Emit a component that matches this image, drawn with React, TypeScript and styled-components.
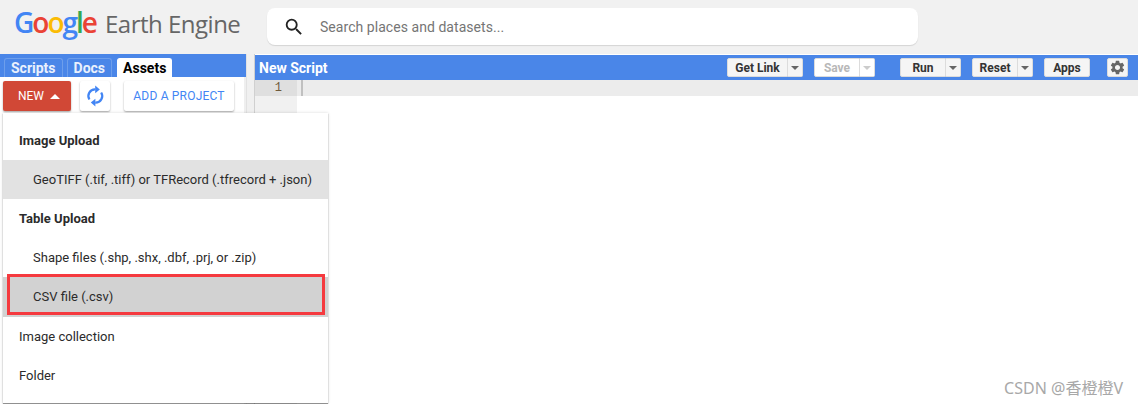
import styled, { createGlobalStyle } from 'styled-components';
import { MdSearch, MdSettings } from 'react-icons/md';

const GlobalStyle = createGlobalStyle`
	html, body {
		margin: 0;
		padding: 0;
		background: #fff;
		font-family: Roboto, 'Liberation Sans', sans-serif;
	}
`;

const Page = styled.div`
	position: relative;
	width: 1138px;
	height: 404px;
	overflow: hidden;
	display: flex;
	flex-direction: column;
`;

const Header = styled.header`
	display: flex;
	align-items: flex-start;
	height: 54px;
	background: #f1f1f1;
	flex-shrink: 0;
`;

const Logo = styled.div`
	display: flex;
	align-items: baseline;
	width: 267px;
	padding: 3px 0 0 14px;
	box-sizing: border-box;
	white-space: nowrap;
`;

const GoogleWord = styled.span`
	font-family: 'Open Sans', sans-serif;
	font-size: 28px;
	font-weight: 600;
	letter-spacing: -2px;
	margin-right: 9px;
`;

const Letter = styled.span<{ $color: string }>`
	color: ${(p) => p.$color};
`;

const EarthEngine = styled.span`
	font-family: 'Open Sans', sans-serif;
	font-size: 24px;
	color: #666;
	letter-spacing: -0.5px;
`;

const SearchBox = styled.div`
	display: flex;
	align-items: center;
	width: 651px;
	height: 37px;
	margin-top: 8px;
	padding-left: 16px;
	box-sizing: border-box;
	background: #fff;
	border-radius: 8px;
	box-shadow: 0 1px 1px rgba(0, 0, 0, 0.12);
	color: #222;
	font-size: 22px;
`;

const SearchText = styled.span`
	margin-left: 15px;
	font-size: 14px;
	color: #757575;
	letter-spacing: 0.05px;
`;

const Body = styled.div`
	display: flex;
	flex: 1;
	min-height: 0;
`;

const LeftPanel = styled.section`
	position: relative;
	width: 246px;
	flex-shrink: 0;
	box-sizing: border-box;
	border-right: 2px solid #efefef;
`;

const TabBar = styled.div`
	display: flex;
	align-items: flex-end;
	gap: 4px;
	height: 23px;
	margin-right: -2px;
	padding-left: 4px;
	background: #4a86e8;
`;

const Tab = styled.div<{ $active?: boolean }>`
	height: 18px;
	padding: 0 ${(p) => (p.$active ? '5px' : '6px')};
	margin-left: ${(p) => (p.$active ? '1px' : '0')};
	border: 1px solid ${(p) => (p.$active ? '#fff' : '#6d9eeb')};
	border-bottom: 0;
	border-radius: 3px 3px 0 0;
	background: ${(p) => (p.$active ? '#fff' : 'transparent')};
	color: ${(p) => (p.$active ? '#000' : '#eaf1fd')};
	font-size: 14px;
	font-weight: 700;
	line-height: 18px;
`;

const ActionRow = styled.div`
	display: flex;
	align-items: flex-start;
	gap: 9px;
	padding: 4px 0 0 3px;
`;

const NewButton = styled.div`
	display: flex;
	align-items: center;
	justify-content: center;
	gap: 6px;
	width: 68px;
	height: 30px;
	padding-left: 4px;
	box-sizing: border-box;
	background: #d14836;
	border-radius: 2px;
	box-shadow: 0 1px 2px rgba(0, 0, 0, 0.35);
	color: #fff;
	font-size: 12px;
`;

const Caret = styled.span`
	width: 0;
	height: 0;
	border-left: 5px solid transparent;
	border-right: 5px solid transparent;
	border-bottom: 5px solid #fff;
`;

const RaisedButton = styled.div`
	display: flex;
	align-items: center;
	justify-content: center;
	height: 30px;
	background: #fff;
	border-radius: 2px;
	box-shadow: 0 1px 2px rgba(0, 0, 0, 0.35);
	color: #4285f4;
	font-size: 12px;
`;

const RefreshButton = styled(RaisedButton)`
	width: 30px;
`;

const ProjectButton = styled(RaisedButton)`
	width: 110px;
	margin-left: 5px;
	letter-spacing: 0.2px;
`;

const Menu = styled.div`
	position: absolute;
	top: 59px;
	left: 3px;
	width: 325px;
	height: 290px;
	padding-top: 8px;
	box-sizing: border-box;
	background: #fff;
	box-shadow: 0 1px 1px rgba(0, 0, 0, 0.4), 0 0 3px rgba(0, 0, 0, 0.15);
	z-index: 2;
`;

const MenuItem = styled.div<{ $heading?: boolean; $nested?: boolean; $shade?: string; $tall?: boolean }>`
	position: relative;
	height: ${(p) => (p.$tall ? '40px' : '39px')};
	padding-left: ${(p) => (p.$nested ? '30px' : '16px')};
	background: ${(p) => p.$shade ?? 'transparent'};
	color: #2b2b2b;
	font-size: 13px;
	font-weight: ${(p) => (p.$heading ? 700 : 400)};
	line-height: 39px;
`;

const Highlight = styled.div`
	position: absolute;
	inset: -3px 3px 2px 4px;
	border: 3px solid #f53a3f;
`;

const Splitter = styled.div`
	width: 9px;
	flex-shrink: 0;
	box-sizing: border-box;
	background: #f0f0f0;
	border-left: 1px solid #e2e2e2;
	border-right: 1px solid #d0d0d0;
`;

const EditorPanel = styled.section`
	display: flex;
	flex-direction: column;
	flex: 1;
	min-width: 0;
`;

const EditorBar = styled.div`
	display: flex;
	align-items: center;
	height: 25px;
	margin-top: 1px;
	padding-right: 10px;
	background: #4a86e8;
`;

const ScriptTitle = styled.div`
	padding-left: 4px;
	color: #fff;
	font-size: 14px;
	font-weight: 700;
	margin-right: auto;
`;

const ButtonGroup = styled.div<{ $gap: number }>`
	display: flex;
	margin-left: ${(p) => p.$gap}px;
`;

const BarButton = styled.div<{ $width: number; $disabled?: boolean; $split?: boolean }>`
	display: flex;
	align-items: center;
	justify-content: center;
	width: ${(p) => p.$width}px;
	height: 19px;
	box-sizing: border-box;
	background: ${(p) => (p.$disabled ? '#fff' : '#f5f5f5')};
	border: 1px solid #dcdcdc;
	border-radius: ${(p) => (p.$split ? '2px 0 0 2px' : '2px')};
	color: ${(p) => (p.$disabled ? '#b8b8b8' : '#333')};
	font-size: 12px;
	font-weight: 700;
`;

const DropButton = styled.div<{ $disabled?: boolean }>`
	display: flex;
	align-items: center;
	justify-content: center;
	width: 15px;
	height: 19px;
	box-sizing: border-box;
	background: ${(p) => (p.$disabled ? '#fff' : '#f5f5f5')};
	border: 1px solid #dcdcdc;
	border-left: 0;
	border-radius: 0 2px 2px 0;

	&::after {
		content: '';
		border-left: 4px solid transparent;
		border-right: 4px solid transparent;
		border-top: 4px solid ${(p) => (p.$disabled ? '#ccc' : '#666')};
	}
`;

const GearButton = styled(BarButton)`
	color: #666;
	font-size: 17px;
`;

const CodeArea = styled.div`
	flex: 1;
	background: linear-gradient(to right, #f1f1f1 42px, #fff 42px);
`;

const CodeLine = styled.div`
	display: flex;
	height: 16px;
	background: #ececec;
`;

const Gutter = styled.div`
	width: 42px;
	padding-right: 15px;
	box-sizing: border-box;
	background: #dfdfdf;
	color: #6f5a3a;
	font-family: 'Liberation Mono', monospace;
	font-size: 12px;
	line-height: 16px;
	text-align: right;
`;

const Cursor = styled.div`
	width: 2px;
	margin-left: 4px;
	background: #c0c0c0;
`;

const Watermark = styled.div`
	position: absolute;
	right: 15px;
	bottom: 5px;
	color: #a8a8a8;
	font-family: 'Noto Sans', 'Noto Sans CJK SC', sans-serif;
	font-size: 16px;
`;

const GOOGLE_LETTERS: [string, string][] = [
	['G', '#4285f4'],
	['o', '#ea4335'],
	['o', '#fbbc05'],
	['g', '#4285f4'],
	['l', '#34a853'],
	['e', '#ea4335'],
];

const RefreshIcon = () => (
	<svg width="30" height="30" viewBox="0 0 30 30" fill="none">
		<path d="M9.4 18.5A6.6 6.6 0 0 1 15.4 8.4" stroke="currentColor" strokeWidth="2.2" />
		<path d="M15.2 4.6 19.8 8.4 15.2 12.2Z" fill="currentColor" />
		<path d="M21.2 11.5A6.6 6.6 0 0 1 15.2 21.6" stroke="currentColor" strokeWidth="2.2" />
		<path d="M15.4 17.8 10.8 21.6 15.4 25.4Z" fill="currentColor" />
	</svg>
);

const App = () => (
	<Page>
		<GlobalStyle />
		<Header>
			<Logo>
				<GoogleWord>
					{GOOGLE_LETTERS.map(([char, color], i) => (
						<Letter key={i} $color={color}>
							{char}
						</Letter>
					))}
				</GoogleWord>
				<EarthEngine>Earth Engine</EarthEngine>
			</Logo>
			<SearchBox>
				<MdSearch />
				<SearchText>Search places and datasets...</SearchText>
			</SearchBox>
		</Header>
		<Body>
			<LeftPanel>
				<TabBar>
					<Tab>Scripts</Tab>
					<Tab>Docs</Tab>
					<Tab $active>Assets</Tab>
				</TabBar>
				<ActionRow>
					<NewButton>
						NEW <Caret />
					</NewButton>
					<RefreshButton>
						<RefreshIcon />
					</RefreshButton>
					<ProjectButton>ADD A PROJECT</ProjectButton>
				</ActionRow>
				<Menu>
					<MenuItem $heading>Image Upload</MenuItem>
					<MenuItem $nested $shade="#e2e2e2">
						GeoTIFF (.tif, .tiff) or TFRecord (.tfrecord + .json)
					</MenuItem>
					<MenuItem $heading>Table Upload</MenuItem>
					<MenuItem $nested>Shape files (.shp, .shx, .dbf, .prj, or .zip)</MenuItem>
					<MenuItem $nested $tall $shade="#d2d2d2">
						CSV file (.csv)
						<Highlight />
					</MenuItem>
					<MenuItem>Image collection</MenuItem>
					<MenuItem>Folder</MenuItem>
				</Menu>
			</LeftPanel>
			<Splitter />
			<EditorPanel>
				<EditorBar>
					<ScriptTitle>New Script</ScriptTitle>
					<ButtonGroup $gap={0}>
						<BarButton $width={61} $split>Get Link</BarButton>
						<DropButton />
					</ButtonGroup>
					<ButtonGroup $gap={11}>
						<BarButton $width={46} $split $disabled>Save</BarButton>
						<DropButton $disabled />
					</ButtonGroup>
					<ButtonGroup $gap={25}>
						<BarButton $width={46} $split>Run</BarButton>
						<DropButton />
					</ButtonGroup>
					<ButtonGroup $gap={11}>
						<BarButton $width={46} $split>Reset</BarButton>
						<DropButton />
					</ButtonGroup>
					<ButtonGroup $gap={11}>
						<BarButton $width={46}>Apps</BarButton>
					</ButtonGroup>
					<ButtonGroup $gap={17}>
						<GearButton $width={21}>
							<MdSettings />
						</GearButton>
					</ButtonGroup>
				</EditorBar>
				<CodeArea>
					<CodeLine>
						<Gutter>1</Gutter>
						<Cursor />
					</CodeLine>
				</CodeArea>
			</EditorPanel>
		</Body>
		<Watermark>CSDN @香橙橙V</Watermark>
	</Page>
);

export default App;
